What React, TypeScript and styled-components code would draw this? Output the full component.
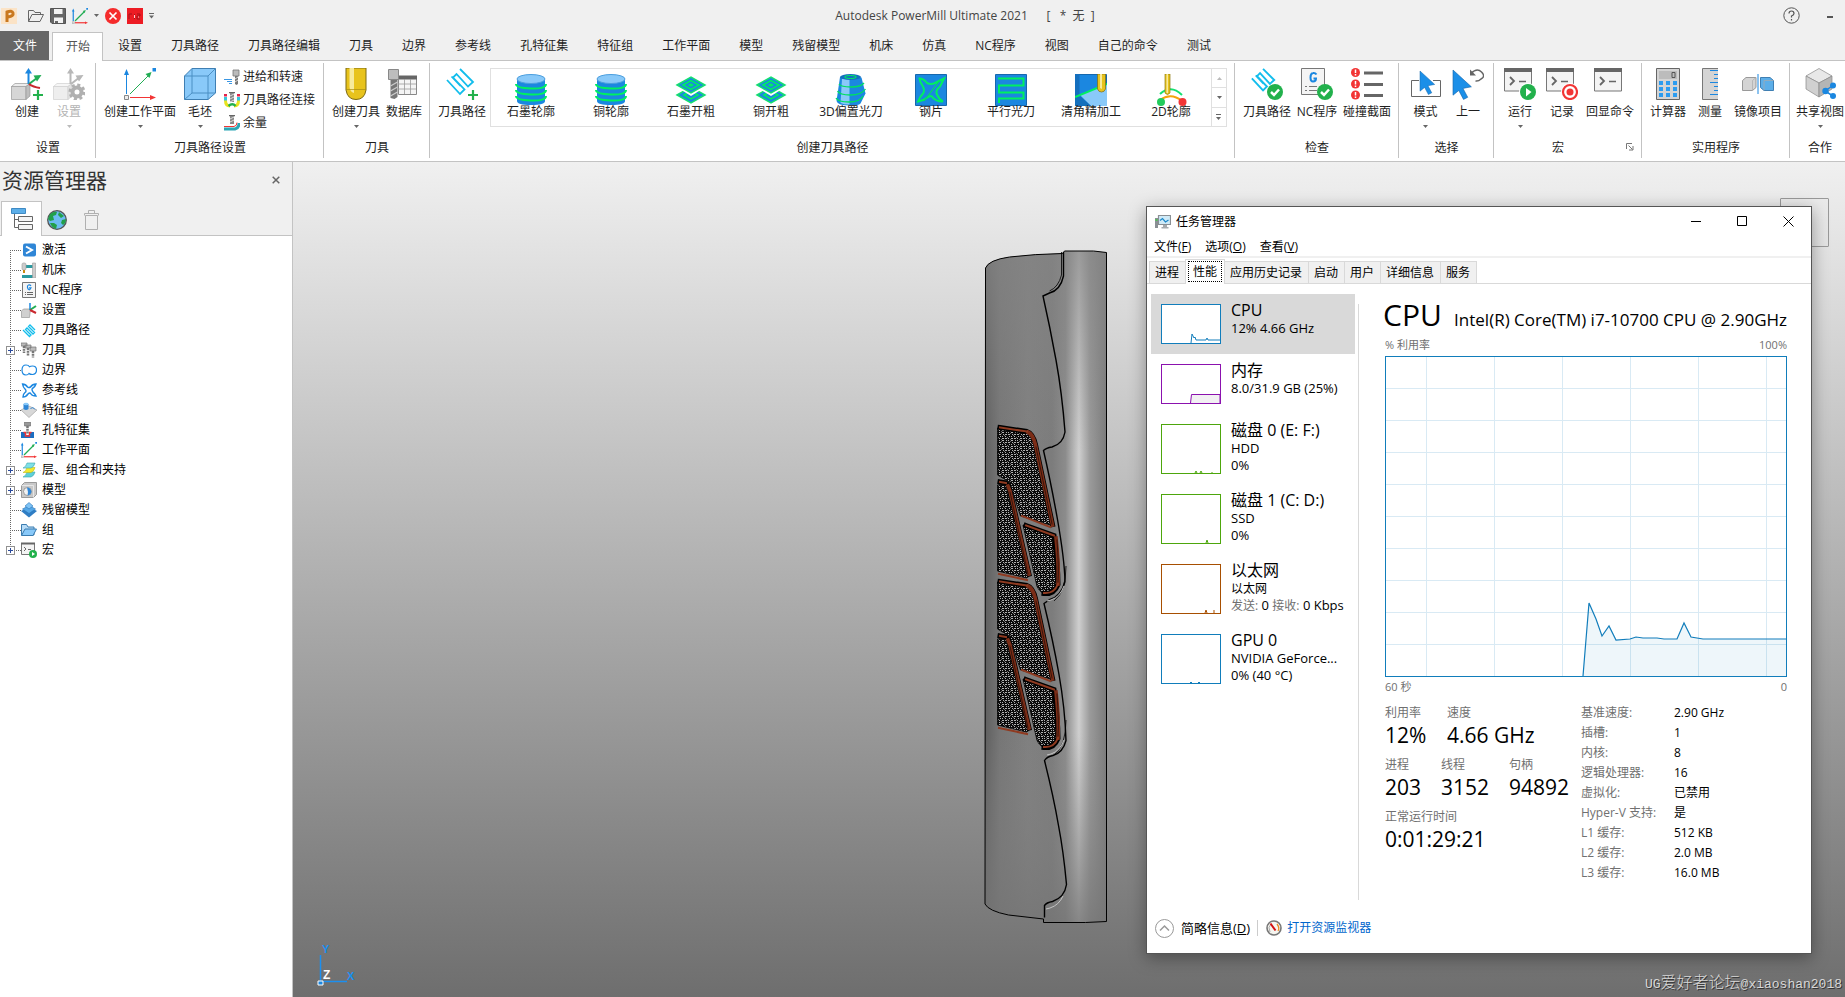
import React from "react";
import styled, { createGlobalStyle, css } from "styled-components";

const GlobalStyle = createGlobalStyle`
  * { box-sizing: border-box; }
  html, body, #root { height: 100%; }
  body {
    margin: 0;
    overflow: hidden;
    background: #f0f0f0;
    color: #1e1e1e;
    font: 12px/16px "Open Sans", "Noto Sans CJK SC", sans-serif;
  }
  button { font: inherit; color: inherit; background: none; border: 0; padding: 0; margin: 0; white-space: nowrap; }
  h1, h2, h3, p, ul, dl, dd, dt { margin: 0; padding: 0; font-weight: 400; }
  ul { list-style: none; }
  svg { display: block; flex: none; }
`;

/* ---------- shell ---------- */

const Shell = styled.div`
  display: flex;
  flex-direction: column;
  height: 100vh;
  min-height: 600px;
`;

const TitleBar = styled.header`
  display: flex;
  align-items: center;
  height: 31px;
  flex: none;
`;

const QuickAccess = styled.div`
  display: flex;
  align-items: center;
  width: 160px;
  padding-left: 1px;
  gap: 6px;
`;

const AppMark = styled.span`
  margin-right: 5px;
`;

const AppTitle = styled.h1`
  flex: 1;
  text-align: center;
  font-size: 12px;
  line-height: 16px;
  color: #444;
  white-space: pre;
`;

const TitleTools = styled.div`
  display: flex;
  align-items: center;
  justify-content: space-between;
  width: 75px;
  padding: 0 12px 0 13px;
`;

const TabStrip = styled.nav`
  display: flex;
  align-items: flex-end;
  gap: 1px;
  height: 30px;
  flex: none;
  border-bottom: 1px solid #c3c3c3;
`;

const RibbonTab = styled.button<{ $kind?: "file" | "active" }>`
  height: 29px;
  padding: 0 14px;
  ${(p) =>
    p.$kind === "file" &&
    css`
      padding: 0 12px 0 13px;
      margin-right: 2px;
      background: #666;
      color: #fff;
    `}
  ${(p) =>
    p.$kind === "active" &&
    css`
      height: 29px;
      padding: 0 12px 0 13px;
      margin-bottom: -1px;
      background: #fff;
      border: 1px solid #c3c3c3;
      border-bottom: 0;
      color: #555;
    `}
`;

const Ribbon = styled.div`
  display: flex;
  height: 101px;
  flex: none;
  padding: 2px 0 3px;
  overflow: hidden;
  background: #fff;
  border-bottom: 1px solid #c3c3c3;
`;

const Group = styled.section<{ $pad?: number }>`
  position: relative;
  display: flex;
  flex-direction: column;
  flex: none;
  padding: 5px ${(p) => (p.$pad ?? 5) - 1}px 2px ${(p) => p.$pad ?? 5}px;
  border-right: 1px solid #c3c3c3;
  &:last-child { padding-right: 0; border-right: 0; }
`;

const GroupBody = styled.div`
  display: flex;
  flex: 1;
  align-items: flex-start;
`;

const GroupCaption = styled.h2<{ $launcher?: boolean }>`
  padding-right: ${(p) => (p.$launcher ? 20 : 0)}px;
  font-size: 12px;
  line-height: 16px;
  text-align: center;
`;

const Launcher = styled.button`
  position: absolute;
  right: 7px;
  bottom: 7px;
`;

const BigButton = styled.button<{ $w: number }>`
  display: flex;
  flex-direction: column;
  align-items: center;
  width: ${(p) => p.$w}px;
  &:disabled { color: #b4b4b4; }
`;

const BigLabel = styled.span`
  margin: 4px 0 5px;
`;

const SmallColumn = styled.div`
  display: flex;
  flex-direction: column;
  gap: 7px;
  padding: 1px 4px 0 0;
`;

const SmallButton = styled.button`
  display: flex;
  align-items: center;
  gap: 3px;
  padding-left: 3px;
`;

const Gallery = styled.div`
  display: flex;
  height: 59px;
  margin: 0 3px 0 1px;
  border: 1px solid #e0e0e0;
`;

const GalleryItem = styled.button`
  display: flex;
  flex-direction: column;
  align-items: center;
  width: 80px;
  padding-top: 5px;
`;

const GalleryLabel = styled.span`
  margin-top: -2px;
`;

const GalleryScroll = styled.div`
  display: flex;
  flex-direction: column;
  width: 15px;
  border-left: 1px solid #e0e0e0;
`;

const ScrollButton = styled.button`
  display: flex;
  flex: 1;
  align-items: center;
  justify-content: center;
  & + & { border-top: 1px solid #e0e0e0; }
`;

const Workspace = styled.div`
  display: flex;
  flex: 1;
  min-height: 0;
`;

/* ---------- explorer ---------- */

const Explorer = styled.aside`
  display: flex;
  flex-direction: column;
  width: 293px;
  flex: none;
  border-right: 1px solid #c3c3c3;
`;

const ExplorerHead = styled.div`
  display: flex;
  align-items: center;
  justify-content: space-between;
  height: 39px;
  padding: 0 12px 3px 2px;
`;

const ExplorerTitle = styled.h2`
  font-size: 21px;
  line-height: 28px;
  color: #333;
`;

const ExplorerTabs = styled.div`
  display: flex;
  align-items: flex-end;
  height: 35px;
  padding-left: 1px;
  border-bottom: 1px solid #c3c3c3;
`;

const ExplorerTab = styled.button<{ $active?: boolean }>`
  display: flex;
  align-items: center;
  justify-content: center;
  width: 35px;
  height: 30px;
  ${(p) =>
    p.$active &&
    css`
      width: 41px;
      height: 35px;
      margin: 0 -3px -1px 0;
      background: #fff;
      border: 1px solid #c3c3c3;
      border-bottom: 0;
    `}
`;

const Tree = styled.ul`
  flex: 1;
  padding: 4px 0 0 10px;
  background: #fff;
  color: #000;
`;

const TreeRow = styled.li`
  display: flex;
  align-items: center;
  height: 20px;
`;

const TreeLines = styled.svg`
  margin-left: -5px;
`;

const TreeLabel = styled.span`
  margin-left: 5px;
`;

/* ---------- viewport ---------- */

const Viewport = styled.main`
  position: relative;
  flex: 1;
  overflow: hidden;
  background: linear-gradient(#f0f0f0, #6e6e6e);
`;

const Model = styled.svg`
  position: absolute;
  left: 687px;
  top: 83px;
`;

const Triad = styled.svg`
  position: absolute;
  left: 18px;
  bottom: 6px;
`;

const NavBox = styled.div`
  position: absolute;
  right: 16px;
  top: 36px;
  width: 49px;
  height: 49px;
  border: 1px solid #999;
  border-radius: 1px;
`;

const Watermark = styled.p`
  position: absolute;
  right: 3px;
  bottom: 2px;
  font: 13px/20px "Liberation Mono", monospace;
  color: #d8d8d8;
  text-shadow: 1px 1px 0 #333;
`;

const WatermarkName = styled.span`
  font: 16px/20px "Noto Sans CJK SC", sans-serif;
  font-weight: 300;
`;

/* ---------- task manager ---------- */

const Win = styled.section`
  position: absolute;
  right: 33px;
  top: 44px;
  display: flex;
  flex-direction: column;
  width: 666px;
  height: 748px;
  border: 1px solid #555;
  background: #fff;
  color: #000;
  box-shadow: 0 4px 16px rgba(0, 0, 0, 0.35);
`;

const WinTitle = styled.div`
  display: flex;
  align-items: center;
  gap: 5px;
  height: 30px;
  padding-left: 8px;
`;

const WinName = styled.h2`
  flex: 1;
  font-size: 12px;
  line-height: 16px;
`;

const WinControls = styled.div`
  display: flex;
  padding-bottom: 2px;
`;

const WinButton = styled.button`
  display: flex;
  align-items: center;
  justify-content: center;
  width: 46px;
  height: 28px;
`;

const MenuBar = styled.div`
  display: flex;
  gap: 14px;
  height: 21px;
  padding-left: 7px;
  border-bottom: 2px solid #f0f0f0;
`;

const WinTabs = styled.div`
  display: flex;
  align-items: flex-end;
  height: 26px;
  padding-left: 2px;
  border-bottom: 1px solid #d9d9d9;
`;

const WinTab = styled.button<{ $active?: boolean }>`
  height: 22px;
  padding: 0 6px 0 5px;
  margin-right: -1px;
  background: #f0f0f0;
  border: 1px solid #d9d9d9;
  border-bottom: 0;
  ${(p) =>
    p.$active &&
    css`
      height: 25px;
      padding: 0 2px 2px;
      margin-bottom: -1px;
      background: #fff;
    `}
`;

const FocusBox = styled.span`
  display: block;
  padding: 1px 4px;
  line-height: 17px;
  border: 1px dotted #000;
`;

const WinBody = styled.div`
  display: flex;
  flex: 1;
  padding: 10px 24px 0 4px;
`;

const DeviceList = styled.ul`
  width: 204px;
`;

const Device = styled.li<{ $active?: boolean }>`
  display: flex;
  gap: 10px;
  padding: 10px;
  background: ${(p) => (p.$active ? "#d9d9d9" : "transparent")};
`;

const Thumb = styled.svg<{ $c: string }>`
  background: #fff;
  border: 1px solid ${(p) => p.$c};
`;

const DeviceText = styled.div`
  margin: -4px -10px -8px 0;
  line-height: 17px;
  white-space: nowrap;
`;

const DeviceName = styled.h3`
  font-size: 16px;
  line-height: 20px;
`;

const DeviceLine = styled.p<{ $small?: boolean }>`
  font-size: ${(p) => (p.$small ? 12 : 13)}px;
  line-height: 17px;
`;

const Dim = styled.span`
  font-size: 12px;
  color: #707070;
`;

const Detail = styled.div`
  flex: 1;
  margin: 10px 0 5px 3px;
  padding-left: 26px;
  border-left: 1px solid #d9d9d9;
`;

const DetailHead = styled.div`
  display: flex;
  align-items: baseline;
  justify-content: space-between;
  height: 32px;
  margin: -1px 0 0 -2px;
`;

const DetailTitle = styled.h2`
  font-size: 30px;
  line-height: 24px;
`;

const DetailModel = styled.p`
  font-size: 17px;
  line-height: 20px;
`;

const AxisRow = styled.div`
  display: flex;
  justify-content: space-between;
  height: 21px;
  font-size: 11px;
  line-height: 20px;
  color: #707070;
`;

const Stats = styled.div`
  display: flex;
  justify-content: space-between;
  margin-top: 5px;
`;

const BigStats = styled.div`
  display: flex;
  flex-direction: column;
  width: 196px;
`;

const StatRow = styled.dl`
  display: flex;
  height: 52px;
`;

const Stat = styled.div<{ $w: number }>`
  width: ${(p) => p.$w}px;
  flex: none;
  white-space: nowrap;
  & dt { line-height: 20px; color: #707070; }
  & dd { font-size: 21px; line-height: 24px; }
`;

const Facts = styled.dl`
  display: grid;
  grid-template-columns: 93px 1fr;
  flex: 1;
  line-height: 20px;
  white-space: nowrap;
  & dt { color: #707070; }
`;

const WinFoot = styled.footer`
  display: flex;
  align-items: center;
  height: 48px;
  padding: 0 0 2px 8px;
`;

const LessButton = styled.button`
  display: flex;
  align-items: center;
  gap: 7px;
  padding-right: 7px;
  font-size: 13px;
`;

const MonitorLink = styled.a`
  display: flex;
  align-items: center;
  gap: 5px;
  padding-left: 8px;
  border-left: 1px solid #ccc;
  color: #0066cc;
  text-decoration: none;
`;

/* ---------- icons ---------- */

const I = ({ s = 32, children }: { s?: number; children: React.ReactNode }) => (
  <svg width={s} height={s} viewBox={`0 0 ${s} ${s}`} fill="none">
    {children}
  </svg>
);

const Down = ({ dim = false }) => (
  <svg width="5" height="3" viewBox="0 0 5 3">
    <path d="M0 0h5L2.500 3z" fill={dim ? "#bbb" : "#666"} />
  </svg>
);

const GreyBox = ({ light = false }) => (
  <g stroke={light ? "#d0d0d0" : "#999"} strokeWidth=".7">
    <path d="M.5 18.5h14.500v13H.5z" fill={light ? "#eee" : "#d6d6d6"} />
    <path d="M.5 18.500L4 15.500h15l-4 3z" fill={light ? "#f6f6f6" : "#ececec"} />
    <path d="M15 18.500l4-3V28l-4 3.500z" fill={light ? "#e2e2e2" : "#bdbdbd"} />
  </g>
);

const CreateSetupIcon = () => (
  <I>
    <GreyBox />
    <path d="M17.500 16V3" stroke="#1b87e0" strokeWidth="2" />
    <path d="M14 5.500L17.500 0 21 5.500z" fill="#1b87e0" />
    <path d="M18 16l8-6" stroke="#21ad54" strokeWidth="2" />
    <path d="M22.500 7.500L30.500 7l-4.500 6.500z" fill="#21ad54" />
    <path d="M18 16q4 3 11 4" stroke="#c9282d" strokeWidth="2" />
    <path d="M27 22v10M22 27h10" stroke="#22b14c" strokeWidth="2.200" />
  </I>
);

const Gear = ({ x, y, c }: { x: number; y: number; c: string }) => (
  <g transform={`translate(${x} ${y})`}>
    <circle r="4.500" stroke={c} strokeWidth="4" />
    <circle r="7" stroke={c} strokeWidth="3" strokeDasharray="3 2.500" />
  </g>
);

const SetupIcon = () => (
  <I>
    <GreyBox light />
    <path d="M17.500 16V3M18 16l9-7" stroke="#b8b8b8" strokeWidth="2" />
    <path d="M14 5.500L17.500 0 21 5.500zM22.500 7.500L30.500 7l-4.500 6.500z" fill="#b8b8b8" />
    <Gear x={24} y={24} c="#b0b0b0" />
  </I>
);

const PlaneIcon = ({ s = 32 }) => (
  <svg width={s} height={s} viewBox="0 0 32 32" fill="none">
    <g strokeWidth={s > 20 ? 1 : 2.400}>
      <path d="M2.500 26V5" stroke="#1b87e0" />
      <path d="M6 26L25 7" stroke="#21ad54" />
      <path d="M6 29.500h22" stroke="#f23535" />
      <path d="M.5 27.500h4v4h-4z" stroke="#888" fill="#eee" strokeWidth="1" />
    </g>
    <path d="M0 7l2.500-6L5 7zM28.500 0h3.500v3.500h-3.500z" fill="#1b87e0" />
    <path d="M27.500 4l-2 6-4-4z" fill="#21ad54" />
    <path d="M26 27l6 2.500-6 2.500z" fill="#f23535" />
  </svg>
);

const BlockIcon = () => (
  <I>
    <path d="M.5 8L8 .5h23.500V25L24 31.500H.5z" fill="#89c9f9" stroke="#3f7fb3" />
    <path d="M.5 8H24v23.500M24 8L31.500.5M8 .5V25h23.500M8 25L.5 31.500" stroke="#4b8fc4" />
  </I>
);

const FeedIcon = () => (
  <I s={16}>
    <path d="M9 1h6v6H9z" fill="#bbb" stroke="#777" strokeWidth=".8" />
    <path d="M11 7h3v8l-1.500 1L11 15z" fill="#777" />
    <path d="M11 10l3-2M11 13l3-2" stroke="#ddd" />
    <path d="M0 10.500h8M3 12.500h5M5 14.500h3" stroke="#3b97e3" />
  </I>
);

const LinkIcon = () => (
  <I s={16}>
    <path d="M5 .5h6" stroke="#666" strokeWidth="1.500" />
    <path d="M6 1h4v9H6z" fill="#888" />
    <path d="M6 4l4-2M6 7l4-2M6 10l4-2" stroke="#ddd" />
    <path d="M1.500 5v4M14.500 5v4" stroke="#34c7dd" strokeWidth="3" />
    <path d="M1.500 2v2.500M14.500 2v2.500" stroke="#e5244a" strokeWidth="3" />
    <path d="M1.500 8.500Q1.500 14 6 14M14.500 8.500q0 5.500-4.500 5.500" stroke="#e8e31e" strokeWidth="3" />
    <path d="M4.500 14q4-3.500 7 0" stroke="#22b14c" strokeWidth="2.500" />
  </I>
);

const StockIcon = () => (
  <I s={16}>
    <path d="M5 .5h6" stroke="#666" strokeWidth="1.500" />
    <path d="M6 1h4v8H6z" fill="#888" />
    <path d="M6 4l4-2M6 7l4-2" stroke="#ddd" />
    <path d="M0 11.500h10q3-.5 3-4" stroke="#f23535" />
    <path d="M0 14h11q4-1 4-6" stroke="#2ba6b5" strokeWidth="3" />
  </I>
);

const ToolIcon = () => (
  <I>
    <path d="M6 0h20v22q-1.500 9.500-10 9.500T6 22z" fill="#e8c31c" stroke="#7d6a12" />
    <path d="M9.500 0h4.500v25q-4-1-4.500-6z" fill="#f7ea9c" />
    <path d="M6 21.500h20" stroke="#a88d12" strokeWidth=".7" />
  </I>
);

const DatabaseIcon = () => (
  <I>
    <path d="M10.500 9.500h18v17h-18z" fill="#f5f5f5" stroke="#888" />
    <path d="M10 7.500h19v4H10z" fill="#666" />
    <path d="M10 16h18M10 21h18M16.500 11v15M22.500 11v15" stroke="#999" strokeWidth=".8" />
    <path d="M.5 1.500h10v10H.5z" fill="#bdbdbd" stroke="#888" />
    <path d="M2.500 12h7v17l-3 2-4-1z" fill="#777" />
    <path d="M2.500 18l7-4M2.500 23l7-4M2.500 28l7-4" stroke="#ccc" strokeWidth="1.300" />
  </I>
);

const Zig = ({ w = 1.8 }) => (
  <path d="M1 12L14 26l4.500-4.500L7 9.500l3.500-3.500 11.500 12.500 5-4.500L14 1M5.500 8.500L14.500 18" stroke="#12bdec" strokeWidth={w} />
);

const PathIcon = () => (
  <I>
    <Zig />
    <path d="M27 22v10M22 27h10" stroke="#22b14c" strokeWidth="2.200" />
  </I>
);

const Check = () => (
  <g>
    <circle cx="24" cy="24" r="8" fill="#22b14c" />
    <path d="M20 24l3 3 5-5.500" stroke="#fff" strokeWidth="2.500" />
  </g>
);

const PathCheckIcon = () => (
  <I>
    <g transform="scale(.86)"><Zig w={2.200} /></g>
    <Check />
  </I>
);

const NcCheckIcon = () => (
  <I>
    <path d="M.5.500h23v26H.5z" fill="#f4f4f4" stroke="#777" />
    <path d="M15.500 6.500Q14 4.500 12 5q-2.500.5-2.500 4.500t2.500 4q3 0 3-3h-2.500" stroke="#1b87e0" strokeWidth="2" />
    <path d="M4 18.500h2M4 22.500h2M8 18.500h8M8 22.500h8" stroke="#777" />
    <Check />
  </I>
);

const CollisionIcon = () => (
  <I>
    {[4.5, 16, 27].map((y) => (
      <g key={y}>
        <circle cx="4.500" cy={y} r="4.500" fill="#f23535" />
        <path d={`M4.500 ${y - 3}v3.500M4.500 ${y + 1.5}v1.500`} stroke="#fff" strokeWidth="1.500" />
        <path d={`M13 ${y + 0.5}h19`} stroke="#666" strokeWidth="3" />
      </g>
    ))}
  </I>
);

const CylinderIcon = () => (
  <I>
    <path d="M2 5v22q0 4 14 4t14-4V5z" fill="#1b87e0" />
    <ellipse cx="16" cy="5" rx="14" ry="4.500" fill="#89c9f9" stroke="#4a9ede" />
    {[10, 16, 22].map((y) => (
      <path key={y} d={`M1 ${y}q0 4 15 4.500t15-4.500`} stroke="#00f060" strokeWidth="2" />
    ))}
  </I>
);

const RoughIcon = () => (
  <I>
    <path d="M2 21l14-8 14 8-14 8z" fill="#1b87e0" stroke="#14e070" strokeWidth="1.500" />
    <path d="M9 21l7-4 7 4-7 4z" stroke="#00f060" strokeWidth="1.500" />
    <path d="M0 12L16 2l16 10-16 10z" fill="#fff" />
    <path d="M2 11l14-8 14 8-14 8z" fill="#1b87e0" stroke="#14e070" strokeWidth="1.500" />
    <path d="M8 11l8-4.500 8 4.500-8 4.500z" stroke="#00f060" strokeWidth="1.500" />
    <path d="M13 11l3-1.800 3 1.800-3 1.800z" fill="#00f060" />
  </I>
);

const OffsetIcon = () => (
  <I>
    <path d="M5 3L1.500 27q1 4.500 14 4.500 8 0 10-2l5-10-4-16z" fill="#1b87e0" />
    <path d="M7 5L5.500 29q5 2 9 1.500V5z" fill="#89c9f9" />
    <ellipse cx="15.500" cy="3" rx="10.500" ry="3" fill="#146fbe" />
    <ellipse cx="15.500" cy="3" rx="6" ry="1.500" stroke="#00f060" />
    <path d="M4 10q2 3 12 3t13-4M2.500 17q2 4 13 4t15-6M1 24q2 4 13 4t14-6" stroke="#00e060" strokeWidth="1.300" />
  </I>
);

const Square = () => <path d="M.5.500h31v31H.5z" fill="#1b87e0" stroke="#1668ad" />;

const SteelIcon = () => (
  <I>
    <Square />
    <path d="M4.500 4.500q4 0 7.500 4.500 4 2 8 0l9-4.500-4 8q-5 4-3 8 2 5 6 7-8 0-11-5-2-1-3 0-5 4-11 5 2-5 5-8 2-3 0-7-3-4-3.500-8z" stroke="#00f060" strokeWidth="2" />
    <path d="M9 27L25 6" stroke="#00e060" strokeWidth="1.200" />
  </I>
);

const RasterIcon = () => (
  <I>
    <Square />
    <path d="M3 4.500h25.500v7H4v7h24.500v6H4V29" stroke="#00f060" strokeWidth="2" />
  </I>
);

const CornerIcon = () => (
  <I>
    <Square />
    <path d="M0 0h4.500v22L0 24z" fill="#146fbe" />
    <path d="M5 21L32 10v22H16z" fill="#89c9f9" />
    <path d="M0 24l5-2 11 10H0z" fill="#1470bd" />
    <path d="M0 23l32-13" stroke="#00f060" strokeWidth="2" />
    <path d="M22.500 0h8v15q-1 3-4 3t-4-3z" fill="#e8c31c" stroke="#7d6a12" strokeWidth=".7" />
    <path d="M25 0h2v15l-2-1z" fill="#f7ea9c" />
  </I>
);

const ProfileIcon = () => (
  <I>
    <path d="M5 26q11-8 22 1" stroke="#f5a30a" strokeWidth="2" />
    <path d="M5 20q11-10 22 1" stroke="#14e070" strokeWidth="2" />
    <path d="M10 0h5v19q-2.500 3-5 0z" fill="#e8c31c" stroke="#8d7812" strokeWidth=".7" />
    <path d="M11.500 0H13v19h-1.500z" fill="#f7ea9c" />
    <circle cx="6" cy="28" r="4" fill="#22cc5c" />
    <circle cx="27.500" cy="28" r="4" fill="#f23535" />
  </I>
);

const Cursor = () => (
  <path d="M0 0v24l5.500-4.500L10 28l4-2-4.500-8.500L17.500 16z" fill="#1b8fe8" stroke="#1668ad" strokeWidth=".6" />
);

const ModeIcon = () => (
  <I>
    <path d="M9 12.500H1.500v16h29v-16H23" stroke="#666" />
    <g transform="translate(10 3) scale(.84)"><Cursor /></g>
  </I>
);

const PreviousIcon = () => (
  <I>
    <g transform="translate(1 2) scale(1.050)"><Cursor /></g>
    <path d="M19 5.500Q25-.5 29.500 4t-.5 7q-2.500 2.500-5.500 2" stroke="#666" strokeWidth="1.500" />
    <path d="M18 1.500v6h6z" fill="#666" />
  </I>
);

const Console = () => (
  <g>
    <path d="M.5.500h27v22.500H.5z" fill="#f4f4f4" stroke="#777" />
    <path d="M0 0h28v4H0z" fill="#666" />
    <path d="M6 9l4 4-4 4" stroke="#666" strokeWidth="1.800" />
    <path d="M15 13.500h7" stroke="#666" strokeWidth="1.500" />
  </g>
);

const RunIcon = () => (
  <I>
    <Console />
    <circle cx="24" cy="24" r="9" fill="#fff" />
    <circle cx="24" cy="24" r="8" fill="#22b14c" />
    <path d="M22 20l5.500 4-5.500 4.500z" fill="#fff" />
  </I>
);

const RecordIcon = () => (
  <I>
    <Console />
    <circle cx="24" cy="24" r="9" fill="#fff" />
    <circle cx="24" cy="24" r="7" fill="#fff" stroke="#f23535" strokeWidth="2.200" />
    <circle cx="24" cy="24" r="3.500" fill="#f23535" />
  </I>
);

const EchoIcon = () => (
  <svg width="32" height="32" viewBox="0 0 32 32" fill="none">
    <Console />
  </svg>
);

const CalculatorIcon = () => (
  <I>
    <path d="M4.500.500h23v31h-23z" fill="#d4d4d4" stroke="#666" />
    <path d="M7 3h18v8H7z" fill="#bcbcbc" />
    <path d="M20 4.500h3v5h-3z" stroke="#555" />
    {[13, 19, 25].map((y) => (
      <path key={y} d={`M7 ${y}h4v4H7zM14 ${y}h4v4h-4zM21 ${y}h4v4h-4z`} fill="#2c9cf0" />
    ))}
  </I>
);

const MeasureIcon = () => (
  <I>
    <path d="M24 .5H8.500v31H24" fill="#d4d4d4" stroke="#777" />
    <path d="M16 2.500h8M16 14.500h8M16 26.500h8M20 6.500h4M20 10.500h4M20 18.500h4M20 22.500h4" stroke="#1b87e0" />
  </I>
);

const MirrorIcon = () => (
  <I>
    <path d="M.5 12.500L4 9.500h10v10l-3.500 3H.5z" fill="#d4d4d4" stroke="#999" />
    <path d="M18.500 9.500h9.500l3.500 3v10H22l-3.500-3z" fill="#5caee8" stroke="#3f7fb3" />
    <path d="M10.500 22.500v-10L14 9.500M22 22.500v-10h9.500" stroke="#aaa" strokeWidth=".7" />
    <path d="M16 6v20" stroke="#1b87e0" />
  </I>
);

const ShareIcon = () => (
  <I>
    <path d="M2 8l13-7.500L28 8l-13 7z" fill="#e8e8e8" stroke="#888" strokeWidth=".7" />
    <path d="M2 8l13 7v14L2 21z" fill="#d0d0d0" stroke="#888" strokeWidth=".7" />
    <path d="M28 8l-13 7v14l13-8z" fill="#b5b5b5" stroke="#888" strokeWidth=".7" />
    <path d="M29 17.500l-8 5.500 8 5" stroke="#1b87e0" strokeWidth="1.500" />
    <circle cx="29" cy="17.500" r="3" fill="#1b87e0" />
    <circle cx="21.500" cy="23" r="3.200" fill="#1b87e0" />
    <circle cx="29" cy="28" r="3" fill="#1b87e0" />
  </I>
);

/* small tree icons */
const treeIcons: Record<string, React.ReactNode> = {
  activate: (
    <>
      <rect x="2" y="1.500" width="13" height="13" rx="2" fill="#2f86d6" />
      <path d="M5 4.500l6 3.500-6 3.500" stroke="#fff" strokeWidth="2" />
    </>
  ),
  machine: (
    <>
      <path d="M4 4.500h8M1 14.500h11" stroke="#2b9aa0" strokeWidth="3" />
      <path d="M11.500 1h3v15h-3z" fill="#ccc" stroke="#999" strokeWidth=".6" />
      <rect x="1" y="1" width="4" height="7" rx="1.500" fill="#ccc" stroke="#999" strokeWidth=".6" />
      <path d="M3 8v3" stroke="#c98b12" strokeWidth="2" />
    </>
  ),
  nc: (
    <>
      <path d="M1.500.500h13v15h-13z" fill="#f4f4f4" stroke="#777" />
      <path d="M10 4Q9 2.500 7.500 3T6.500 5.500t1.500 2.300 2-2H8" stroke="#1b87e0" strokeWidth="1.200" />
      <path d="M4 10.500h1M4 12.500h1M6 10.500h6M6 12.500h6" stroke="#666" />
    </>
  ),
  setup: (
    <>
      <path d="M.5 9l2-2h7l-1 8.500h-8z" fill="#d0d0d0" stroke="#999" strokeWidth=".7" />
      <path d="M9 8V1" stroke="#1b87e0" strokeWidth="1.500" />
      <path d="M9 8l6-4" stroke="#21ad54" strokeWidth="2" />
      <path d="M9 8l6 3" stroke="#c9282d" strokeWidth="2" />
    </>
  ),
  path: <path d="M2 8l6.500 6.500 1.500-1.500L4.500 7.500 6 6l6 6 1.500-1.500L7.500 4.500 9 3l5 5" stroke="#12bdec" strokeWidth="1.300" />,
  tools: (
    <>
      <path d="M0 1h6v3H0zM4 3h6v3H4zM9 5h6v4H9z" fill="#bbb" stroke="#777" strokeWidth=".7" />
      <path d="M3 4v7M7 6v8M12 9v6.500" stroke="#777" strokeWidth="2.500" strokeDasharray="2 .7" />
    </>
  ),
  boundary: <path d="M5 3Q1 3 1 8t4 5q2 0 3-1.500 1 1 3.500 1 4-.5 4-4.500t-4-4q-2 0-3 .7Q7.500 3 5 3z" stroke="#1b87e0" strokeWidth="1.200" />,
  pattern: <path d="M1.500 2q3 0 5 3 1 1 3 0 2-3 5.500-3-1 3-3 4t0 4q2 2 3 4-4 0-5-2t-3 0q-2 3-5 3 0-3 2-4.500t0-3.500q-2-2-2.500-5z" stroke="#1b87e0" strokeWidth="1.400" />,
  feature: (
    <>
      <path d="M0 8l8-4 8 4-8 7.500z" fill="#d8d8d8" stroke="#999" strokeWidth=".6" />
      <path d="M2.500 2v5q2.500 2 5 0V2z" fill="#2f86d6" />
      <ellipse cx="5" cy="2" rx="2.500" ry="1.300" fill="#89c9f9" />
      <path d="M9.500 7q2-3 4.500.500" stroke="#2f86d6" />
    </>
  ),
  hole: (
    <>
      <path d="M0 10h4v3h5v-3h4v6H0z" fill="#1b6ec2" />
      <path d="M2.500 10.500h2V14h4v-3.500h2" stroke="#f23535" strokeWidth="1.500" />
      <path d="M3.500 0h6v4h-6z" fill="#999" stroke="#666" strokeWidth=".6" />
      <path d="M6.500 4v8" stroke="#777" strokeWidth="2.500" strokeDasharray="2 .7" />
    </>
  ),
  levels: (
    <>
      <path d="M2 15q3-1 4-5h8q-1 4-4 5z" fill="#5fd0d8" stroke="#3aa5ad" strokeWidth=".6" />
      <path d="M2 10.500q3-1 4-5h8q-1 4-4 5z" fill="#f2ea2e" stroke="#c2bb16" strokeWidth=".6" />
      <path d="M2 6q3-1 4-5h8q-1 4-4 5z" fill="#7fe0e6" stroke="#3aa5ad" strokeWidth=".6" />
    </>
  ),
  model: (
    <>
      <path d="M.5 3.500l3-3h12v12l-3 3H.5z" fill="#c8c8c8" stroke="#888" strokeWidth=".8" />
      <path d="M.5 3.500h12v12" stroke="#eee" strokeWidth=".8" />
      <circle cx="6.500" cy="9.500" r="4" fill="#f2f2f2" stroke="#888" strokeWidth=".8" />
      <path d="M6 5.500q3.500 0 4.500 4-.5 3.500-4 4 1-4-.5-8z" fill="#2f86d6" />
    </>
  ),
  stock: (
    <>
      <path d="M0 9l8-4 8 4-8 6.500z" fill="#2f7dc4" />
      <path d="M1.500 7L8 3.500 14.500 7 8 11.500z" fill="#55a8e8" stroke="#2a75b8" strokeWidth=".6" />
      <path d="M4 4l4-3.500L12 4 8 7z" fill="#7fc3f5" stroke="#2a75b8" strokeWidth=".6" />
    </>
  ),
  group: (
    <>
      <path d="M.5 13V2.500h5L7 5h6v8z" fill="#b8dcf7" stroke="#3a7cb0" />
      <path d="M.5 13.500L4 7h11.500l-3.500 6.500z" fill="#89c9f9" stroke="#3a7cb0" />
    </>
  ),
  macro: (
    <>
      <path d="M.5 1.500h13v11H.5z" fill="#f4f4f4" stroke="#777" />
      <path d="M0 1.500h14" stroke="#666" strokeWidth="2" />
      <path d="M3 5l2 2-2 2M7 7.500h3" stroke="#666" />
      <circle cx="12" cy="12" r="4" fill="#22b14c" />
      <path d="M11 10l3 2-3 2z" fill="#fff" />
    </>
  ),
};

/* ---------- data ---------- */

const tabs = ["设置", "刀具路径", "刀具路径编辑", "刀具", "边界", "参考线", "孔特征集", "特征组", "工作平面", "模型", "残留模型", "机床", "仿真", "NC程序", "视图", "自己的命令", "测试"];

const gallery: [string, React.ReactNode][] = [
  ["石墨轮廓", <CylinderIcon />],
  ["铜轮廓", <CylinderIcon />],
  ["石墨开粗", <RoughIcon />],
  ["铜开粗", <RoughIcon />],
  ["3D偏置光刀", <OffsetIcon />],
  ["钢片", <SteelIcon />],
  ["平行光刀", <RasterIcon />],
  ["清角精加工", <CornerIcon />],
  ["2D轮廓", <ProfileIcon />],
];

const tree: [string, string, boolean?][] = [
  ["激活", "activate"],
  ["机床", "machine"],
  ["NC程序", "nc"],
  ["设置", "setup"],
  ["刀具路径", "path"],
  ["刀具", "tools", true],
  ["边界", "boundary"],
  ["参考线", "pattern"],
  ["特征组", "feature"],
  ["孔特征集", "hole"],
  ["工作平面", "plane"],
  ["层、组合和夹持", "levels", true],
  ["模型", "model", true],
  ["残留模型", "stock"],
  ["组", "group"],
  ["宏", "macro", true],
];

const facts = [
  ["基准速度:", "2.90 GHz"],
  ["插槽:", "1"],
  ["内核:", "8"],
  ["逻辑处理器:", "16"],
  ["虚拟化:", "已禁用"],
  ["Hyper-V 支持:", "是"],
  ["L1 缓存:", "512 KB"],
  ["L2 缓存:", "2.0 MB"],
  ["L3 缓存:", "16.0 MB"],
];

/* ---------- parts ---------- */

type BigProps = { w: number; label: string; icon: React.ReactNode; menu?: boolean; off?: boolean };

const Big = ({ w, label, icon, menu, off }: BigProps) => (
  <BigButton $w={w} disabled={off}>
    {icon}
    <BigLabel>{label}</BigLabel>
    {menu && <Down dim={off} />}
  </BigButton>
);

const TreeItem = ({ label, icon, plus, first, last }: { label: string; icon: string; plus?: boolean; first: boolean; last: boolean }) => (
  <TreeRow>
    <TreeLines width="16" height="20" viewBox="0 0 16 20" fill="none" shapeRendering="crispEdges">
      <path d={`M5.500 ${first ? 10 : 0}V${last ? 10 : 20}`} stroke="#666" strokeDasharray="1 1" />
      <path d="M5 10.500H16" stroke="#666" strokeDasharray="1 1" />
      {plus && (
        <>
          <rect x="1.500" y="6.500" width="8" height="8" fill="#fff" stroke="#919191" />
          <path d="M3 10.500h5M5.500 8v5" stroke="#2b4a9b" />
        </>
      )}
    </TreeLines>
    {icon === "plane" ? <PlaneIcon s={16} /> : <I s={16}>{treeIcons[icon]}</I>}
    <TreeLabel>{label}</TreeLabel>
  </TreeRow>
);

const Cluster = () => (
  <g>
    <g fill="url(#mesh)" stroke="#000" strokeWidth=".8">
      <path d="M997.500 428l30 4q6 3 9 14l17 80-33-10-11-34-12-7z" />
      <path d="M997.500 485l8-1 24 92-3 2-29-7z" />
      <path d="M1023 525l32 10q5 30 4 50-3 10-14 9-8-3-9-12z" />
    </g>
    <g fill="none" strokeLinecap="square">
      <g stroke="#000" strokeWidth="5">
        <path d="M1000 427.500l27 4q6 2 8.500 13l17 80M1000 482l6 1q3 2 4 8l19 83M1026 525.500l28 10q4 30 4 49-4 10-14 9" />
      </g>
      <g stroke="#7c2d17" strokeWidth="3.600">
        <path d="M1028 432q5 2 7.500 13l17 80M1008 486l2 5 19 83M1056 538q3 27 2 46" />
      </g>
      <g stroke="#8f3a20" strokeWidth="2">
        <path d="M1000 427.500l27 4M1000 482l6 1M1026 525.500l28 10M1058 584q-4 10-14 9M999 574l28 6M1022 516l28 11" />
      </g>
      <path d="M1036 447l16 77M1010 492l18 82M1057 540q2 27 1 42" stroke="#1a0a05" strokeWidth=".7" />
    </g>
  </g>
);

const BODY = "M985.500 268q3-8 24-11 25-3 53-3.500l2-2.500h29l13 1.500v669l-21 1h-42v-3.500l-35-4q-20-4-23.500-11z";

const ModelView = () => (
  <Model width="132" height="684" viewBox="980 245 132 684" fill="none">
    <defs>
      <linearGradient id="body" x1="985" x2="1107" y1="0" y2="0" gradientUnits="userSpaceOnUse">
        <stop offset="0" stopColor="#606060" />
        <stop offset=".12" stopColor="#767676" />
        <stop offset=".35" stopColor="#808080" />
        <stop offset=".55" stopColor="#7c7c7c" />
        <stop offset=".66" stopColor="#8c8c8c" />
        <stop offset=".77" stopColor="#cfcfcf" />
        <stop offset=".86" stopColor="#9a9a9a" />
        <stop offset="1" stopColor="#7a7a7a" />
      </linearGradient>
      <linearGradient id="ends" x1="0" x2="0" y1="250" y2="922" gradientUnits="userSpaceOnUse">
        <stop offset="0" stopColor="#858585" stopOpacity=".7" />
        <stop offset=".3" stopColor="#858585" stopOpacity="0" />
        <stop offset=".72" stopColor="#858585" stopOpacity="0" />
        <stop offset="1" stopColor="#757575" stopOpacity=".8" />
      </linearGradient>
      <pattern id="mesh" width="9" height="8" patternUnits="userSpaceOnUse">
        <rect width="9" height="8" fill="#0a0a0a" />
        <path d="M0 .5h1M3 .5h2M7 .5h1M0 2.500h2M4 2.500h1M6 2.500h2M1 4.500h1M3 4.500h1M6 4.500h1M0 6.500h1M3 6.500h2M6 6.500h2" stroke="#b0b0b0" />
        <path d="M2 1.500h1M5 3.500h1M8 5.500h1M2 7.500h1" stroke="#666" />
      </pattern>
    </defs>
    <path d={BODY} fill="url(#body)" />
    <path d={BODY} fill="url(#ends)" stroke="#000" />
    <g stroke="#000" strokeWidth="1.400">
      <path d="M1063.500 252v24q-3 14-14 17l-6.500 3q7 31 13 64t9 72q-2 12-13 15-6 1-8.500 3.500 7 30 14 69 7 40 7.500 62-4 15-15 18l-6 4q9 37 15 71t7 66q-3 12-13 15-6 1-8.500 5 9 36 14 65 5 26 8 59-2 13-14 17-6 1-8 4v12" />
      <path d="M1061.500 252v23q-3 12-12 16M1066 566q0 26-12 35M1066 720q0 26-12 35" strokeWidth=".8" />
    </g>
    <g stroke="#c4c4c4">
      <path d="M1064 586q-4 11-13 14l-4 1M1064 740q-4 11-13 14l-4 1M1063 896q-4 9-13 12l-4 1" />
    </g>
    <Cluster />
    <g transform="translate(0 154)"><Cluster /></g>
  </Model>
);

const GRAPH_POINTS = "198,320 204,247 211,263 217,280 224,270 231,284 245,283 251,281 258,282 272,282 279,283 292,283 299,267 306,281 318,283 402,283";

const UsageGraph = () => (
  <svg width="100%" height="321" viewBox="0 0 402 321" preserveAspectRatio="none" fill="none" role="img" aria-label="% 利用率">
    <g stroke="#d9eaf4">
      {[41.5, 109.5, 177.5, 245.5, 313.5, 381.5].map((x) => <path key={x} d={`M${x} 0v320`} />)}
      {[32.5, 64.5, 96.5, 128.5, 160.5, 192.5, 224.5, 256.5, 288.5].map((y) => <path key={y} d={`M0 ${y}h402`} />)}
    </g>
    <polygon points={`${GRAPH_POINTS} 402,320`} fill="#117dbb" fillOpacity=".07" />
    <polyline points={GRAPH_POINTS} stroke="#117dbb" strokeWidth="1.200" />
    <rect x=".5" y=".5" width="401" height="320" stroke="#117dbb" />
  </svg>
);

type DevProps = { c: string; h: number; name: string; active?: boolean; art: React.ReactNode; children: React.ReactNode };

const DeviceRow = ({ c, h, name, active, art, children }: DevProps) => (
  <Device $active={active}>
    <Thumb $c={c} width="60" height={h} viewBox={`0 0 58 ${h - 2}`} fill="none" stroke={c}>
      {art}
    </Thumb>
    <DeviceText>
      <DeviceName>{name}</DeviceName>
      {children}
    </DeviceText>
  </Device>
);

const TaskManager = () => (
  <Win aria-label="任务管理器">
    <WinTitle>
      <I s={16}>
        <path d="M0 4h3v10H0z" fill="#8a8f94" />
        <path d="M.5 6h2" stroke="#3fd33f" strokeWidth="1.500" />
        <path d="M3.500 1.500h12v9h-12z" fill="#cfeaf7" stroke="#8a8f94" strokeWidth="1.200" />
        <path d="M5 6.500l2.500-2 3 3.500 3-2" stroke="#1b87c9" strokeWidth="1.200" />
        <path d="M8 11h4v2h1.500v1.500h-7V13H8z" fill="#a5aaae" />
      </I>
      <WinName>任务管理器</WinName>
      <WinControls>
        <WinButton aria-label="最小化"><I s={11}><path d="M0 5.500h10" stroke="#000" /></I></WinButton>
        <WinButton aria-label="最大化"><I s={11}><path d="M.5.500h9v9h-9z" stroke="#000" /></I></WinButton>
        <WinButton aria-label="关闭"><I s={11}><path d="M.5.500l10 10M10.500.500l-10 10" stroke="#000" /></I></WinButton>
      </WinControls>
    </WinTitle>
    <MenuBar>
      <button>文件(<u>F</u>)</button>
      <button>选项(<u>O</u>)</button>
      <button>查看(<u>V</u>)</button>
    </MenuBar>
    <WinTabs>
      <WinTab>进程</WinTab>
      <WinTab $active><FocusBox>性能</FocusBox></WinTab>
      {["应用历史记录", "启动", "用户", "详细信息", "服务"].map((t) => <WinTab key={t}>{t}</WinTab>)}
    </WinTabs>
    <WinBody>
      <DeviceList>
        <DeviceRow c="#117dbb" h={40} name="CPU" active art={<path d="M29 38l1-9 2 4 1-1 1 3h10l1-2 1 2h13" />}>
          <DeviceLine>12% 4.66 GHz</DeviceLine>
        </DeviceRow>
        <DeviceRow c="#8b12ae" h={40} name="内存" art={<path d="M28.500 38l1-8.500H58V38" fill="#f2f0f3" />}>
          <DeviceLine>8.0/31.9 GB (25%)</DeviceLine>
        </DeviceRow>
        <DeviceRow c="#4da60c" h={50} name="磁盘 0 (E: F:)" art={<path d="M33 48l1-2 1 2M38 48l1-2 1 2M50 48v-1" />}>
          <DeviceLine>HDD</DeviceLine>
          <DeviceLine>0%</DeviceLine>
        </DeviceRow>
        <DeviceRow c="#4da60c" h={50} name="磁盘 1 (C: D:)" art={<path d="M44 48l1-3 1 3" />}>
          <DeviceLine>SSD</DeviceLine>
          <DeviceLine>0%</DeviceLine>
        </DeviceRow>
        <DeviceRow c="#a74f01" h={50} name="以太网" art={<path d="M43 48l1-3 1 3M52 48v-3" />}>
          <DeviceLine $small>以太网</DeviceLine>
          <DeviceLine><Dim>发送:</Dim> 0 <Dim>接收:</Dim> 0 Kbps</DeviceLine>
        </DeviceRow>
        <DeviceRow c="#117dbb" h={50} name="GPU 0" art={<path d="M28 47.500h2M36 47.500h2" />}>
          <DeviceLine>NVIDIA GeForce...</DeviceLine>
          <DeviceLine>0% (40 °C)</DeviceLine>
        </DeviceRow>
      </DeviceList>
      <Detail>
        <DetailHead>
          <DetailTitle>CPU</DetailTitle>
          <DetailModel>Intel(R) Core(TM) i7-10700 CPU @ 2.90GHz</DetailModel>
        </DetailHead>
        <AxisRow><span>% 利用率</span><span>100%</span></AxisRow>
        <UsageGraph />
        <AxisRow><span>60 秒</span><span>0</span></AxisRow>
        <Stats>
          <BigStats>
            <StatRow>
              <Stat $w={62}><dt>利用率</dt><dd>12%</dd></Stat>
              <Stat $w={100}><dt>速度</dt><dd>4.66 GHz</dd></Stat>
            </StatRow>
            <StatRow>
              <Stat $w={56}><dt>进程</dt><dd>203</dd></Stat>
              <Stat $w={68}><dt>线程</dt><dd>3152</dd></Stat>
              <Stat $w={68}><dt>句柄</dt><dd>94892</dd></Stat>
            </StatRow>
            <StatRow>
              <Stat $w={120}><dt>正常运行时间</dt><dd>0:01:29:21</dd></Stat>
            </StatRow>
          </BigStats>
          <Facts>
            {facts.map(([k, v]) => (
              <React.Fragment key={k}>
                <dt>{k}</dt>
                <dd>{v}</dd>
              </React.Fragment>
            ))}
          </Facts>
        </Stats>
      </Detail>
    </WinBody>
    <WinFoot>
      <LessButton>
        <I s={19}>
          <circle cx="9.500" cy="9.500" r="9" stroke="#999" />
          <path d="M5 11.500L9.500 7l4.500 4.500" stroke="#999" strokeWidth="1.500" />
        </I>
        <span>简略信息(<u>D</u>)</span>
      </LessButton>
      <MonitorLink href="#monitor">
        <I s={16}>
          <circle cx="8" cy="8" r="7" fill="#f5f5ef" stroke="#777" strokeWidth="1.600" />
          <path d="M4 12Q1.500 7 5 4" stroke="#aaa" />
          <path d="M11 4q3 4 1 7" stroke="#f08a24" strokeWidth="1.300" />
          <path d="M4.500 3.500l5 7" stroke="#d40f0f" strokeWidth="2" />
        </I>
        打开资源监视器
      </MonitorLink>
    </WinFoot>
  </Win>
);

/* ---------- page ---------- */

export default function App() {
  return (
    <Shell>
      <GlobalStyle />
      <TitleBar>
        <QuickAccess>
          <AppMark>
            <I s={16}>
              <path d="M0 0h16v16H0z" fill="#fbe3c6" />
              <path d="M6 14V4q5-2 6 1t-5 4" stroke="#c9781f" strokeWidth="3" />
            </I>
          </AppMark>
          <button aria-label="打开">
            <I s={16}><path d="M.5 13.500V2.500h5l1.500 2h5.500v2M.5 13.500l3.500-7h11.500l-3.500 7z" stroke="#666" /></I>
          </button>
          <button aria-label="保存">
            <I s={16}>
              <path d="M.5.500h15v15H2L.5 14z" fill="#666" stroke="#555" />
              <path d="M4 1h8.500v5H4zM4 9.500h9V15H4z" fill="#f2f2f2" />
              <path d="M5 13h3v2H5z" fill="#666" />
            </I>
          </button>
          <button aria-label="工作平面"><PlaneIcon s={16} /></button>
          <button aria-label="更多"><Down /></button>
          <button aria-label="取消">
            <I s={16}><circle cx="8" cy="8" r="8" fill="#f52c2c" /><path d="M4.500 4.500l7 7M11.500 4.500l-7 7" stroke="#fff" strokeWidth="1.700" /></I>
          </button>
          <button aria-label="宏">
            <I s={16}><path d="M0 0h16v16H0z" fill="#ed1c24" /><path d="M2 11V6h3M7.500 6v5M10 6h3v2h-3v3h3" stroke="#a3131a" /><path d="M7.500 7v3M11 9h1" stroke="#ffd0d0" /></I>
          </button>
          <button aria-label="自定义">
            <I s={6}><path d="M0 .5h5" stroke="#666" /><path d="M0 2.500h5L2.500 5.500z" fill="#666" /></I>
          </button>
        </QuickAccess>
        <AppTitle>{"Autodesk PowerMill Ultimate 2021      [   *  无  ]"}</AppTitle>
        <TitleTools>
          <button aria-label="帮助">
            <I s={17}>
              <circle cx="8.500" cy="8.500" r="7.700" stroke="#555" />
              <path d="M6 6.500Q6 4 8.500 4T11 6.500q0 1.500-2.500 2.500v1.500M8.500 12v1.500" stroke="#555" strokeWidth="1.200" />
            </I>
          </button>
          <button aria-label="最小化"><I s={6}><path d="M0 4h6" stroke="#555" strokeWidth="2" /></I></button>
        </TitleTools>
      </TitleBar>

      <TabStrip>
        <RibbonTab $kind="file">文件</RibbonTab>
        <RibbonTab $kind="active">开始</RibbonTab>
        {tabs.map((t) => <RibbonTab key={t}>{t}</RibbonTab>)}
      </TabStrip>

      <Ribbon>
        <Group $pad={6}>
          <GroupBody>
            <Big w={42} label="创建" icon={<CreateSetupIcon />} />
            <Big w={42} label="设置" icon={<SetupIcon />} menu off />
          </GroupBody>
          <GroupCaption>设置</GroupCaption>
        </Group>
        <Group>
          <GroupBody>
            <Big w={78} label="创建工作平面" icon={<PlaneIcon />} menu />
            <Big w={42} label="毛坯" icon={<BlockIcon />} menu />
            <SmallColumn>
              <SmallButton><FeedIcon />进给和转速</SmallButton>
              <SmallButton><LinkIcon />刀具路径连接</SmallButton>
              <SmallButton><StockIcon />余量</SmallButton>
            </SmallColumn>
          </GroupBody>
          <GroupCaption>刀具路径设置</GroupCaption>
        </Group>
        <Group>
          <GroupBody>
            <Big w={54} label="创建刀具" icon={<ToolIcon />} menu />
            <Big w={42} label="数据库" icon={<DatabaseIcon />} />
          </GroupBody>
          <GroupCaption>刀具</GroupCaption>
        </Group>
        <Group>
          <GroupBody>
            <Big w={54} label="刀具路径" icon={<PathIcon />} />
            <Gallery>
              {gallery.map(([label, icon]) => (
                <GalleryItem key={label}>
                  {icon}
                  <GalleryLabel>{label}</GalleryLabel>
                </GalleryItem>
              ))}
              <GalleryScroll>
                <ScrollButton aria-label="上"><svg width="5" height="3"><path d="M0 3h5L2.500 0z" fill="#bbb" /></svg></ScrollButton>
                <ScrollButton aria-label="下"><Down /></ScrollButton>
                <ScrollButton aria-label="展开"><I s={6}><path d="M0 .5h5" stroke="#666" /><path d="M0 3h5L2.500 6z" fill="#666" /></I></ScrollButton>
              </GalleryScroll>
            </Gallery>
          </GroupBody>
          <GroupCaption>创建刀具路径</GroupCaption>
        </Group>
        <Group>
          <GroupBody>
            <Big w={54} label="刀具路径" icon={<PathCheckIcon />} />
            <Big w={46} label="NC程序" icon={<NcCheckIcon />} />
            <Big w={54} label="碰撞截面" icon={<CollisionIcon />} />
          </GroupBody>
          <GroupCaption>检查</GroupCaption>
        </Group>
        <Group>
          <GroupBody>
            <Big w={43} label="模式" icon={<ModeIcon />} menu />
            <Big w={42} label="上一" icon={<PreviousIcon />} />
          </GroupBody>
          <GroupCaption>选择</GroupCaption>
        </Group>
        <Group>
          <GroupBody>
            <Big w={42} label="运行" icon={<RunIcon />} menu />
            <Big w={42} label="记录" icon={<RecordIcon />} />
            <Big w={54} label="回显命令" icon={<EchoIcon />} />
          </GroupBody>
          <GroupCaption $launcher>宏</GroupCaption>
          <Launcher aria-label="宏选项">
            <I s={8}><path d="M.5 6V.5H6M2.500 2.500l4 4M7 3v4H3" stroke="#777" /></I>
          </Launcher>
        </Group>
        <Group>
          <GroupBody>
            <Big w={42} label="计算器" icon={<CalculatorIcon />} />
            <Big w={42} label="测量" icon={<MeasureIcon />} />
            <Big w={54} label="镜像项目" icon={<MirrorIcon />} />
          </GroupBody>
          <GroupCaption>实用程序</GroupCaption>
        </Group>
        <Group>
          <GroupBody>
            <Big w={50} label="共享视图" icon={<ShareIcon />} menu />
          </GroupBody>
          <GroupCaption>合作</GroupCaption>
        </Group>
      </Ribbon>

      <Workspace>
        <Explorer>
          <ExplorerHead>
            <ExplorerTitle>资源管理器</ExplorerTitle>
            <button aria-label="关闭"><I s={8}><path d="M.7.700l6.600 6.600M7.300.700L.7 7.300" stroke="#666" strokeWidth="1.500" /></I></button>
          </ExplorerHead>
          <ExplorerTabs>
            <ExplorerTab $active aria-label="树">
              <I s={24}>
                <path d="M1.500 1.500h14v5h-14z" fill="#5caee8" stroke="#3f8ac4" />
                <path d="M4.500 7v13.500H9M4.500 12.500H9" stroke="#666" />
                <path d="M8.500 9.500h14v5h-14zM8.500 17.500h14v5h-14z" fill="#f4f4f4" stroke="#666" />
              </I>
            </ExplorerTab>
            <ExplorerTab aria-label="网络">
              <I s={20}>
                <circle cx="10" cy="10" r="9.300" fill="#6cbcf2" stroke="#555" strokeWidth="1.300" />
                <path d="M3 4q4-3 7-2l-1 3-3 1 1 4-4 1-2-2zM12 2l5 4-3 2-3-3zM15 10l4-1q0 4-3 6l-2-2zM3 13l4 0 3 2-1 4q-4-1-6-6z" fill="#22a04a" />
              </I>
            </ExplorerTab>
            <ExplorerTab aria-label="回收站">
              <I s={20}><path d="M3.500 5.500h12v14h-12zM2.500 5.500v-2h14v2M6.500 3V.5h6V3" stroke="#b0b0b0" /></I>
            </ExplorerTab>
          </ExplorerTabs>
          <Tree>
            {tree.map(([label, icon, plus], i) => (
              <TreeItem key={label} label={label} icon={icon} plus={plus} first={i === 0} last={i === tree.length - 1} />
            ))}
          </Tree>
        </Explorer>

        <Viewport>
          <ModelView />
          <Triad width="50" height="50" viewBox="0 0 50 50" fill="none">
            <path d="M9.500 40V14M9.500 40.500H36" stroke="#1b8ff0" strokeWidth="1.500" />
            <path d="M7 40h5v4H7z" stroke="#fff" fill="#1b87e0" />
            <text x="11" y="4" fontSize="11" fontWeight="700" fill="#1b8ff0" dominantBaseline="hanging" fontFamily="Liberation Sans">Y</text>
            <text x="36" y="39" fontSize="11" fontWeight="700" fill="#1b8ff0" fontFamily="Liberation Sans">X</text>
            <text x="12" y="38" fontSize="12" fontWeight="700" fill="#fff" fontFamily="Liberation Sans">Z</text>
          </Triad>
          <NavBox />
          <TaskManager />
          <Watermark>UG<WatermarkName>爱好者论坛</WatermarkName>@xiaoshan2018</Watermark>
        </Viewport>
      </Workspace>
    </Shell>
  );
}
